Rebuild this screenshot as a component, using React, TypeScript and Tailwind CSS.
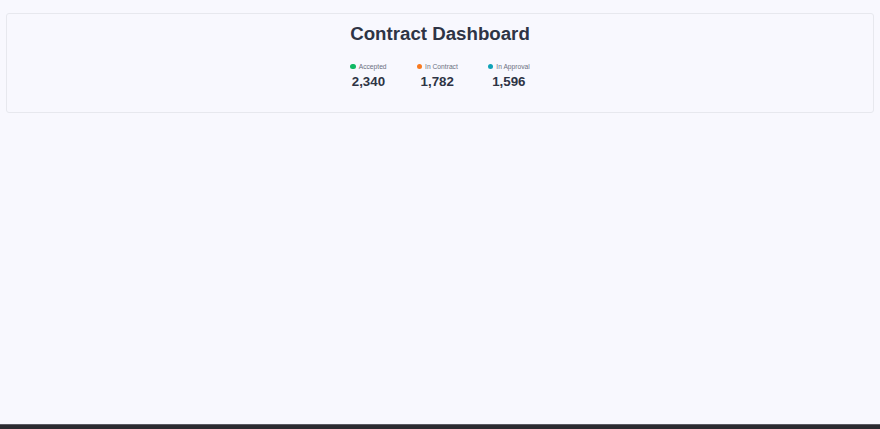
import React from "react";

const stats = [
  { label: "Accepted", value: "2,340", dot: "bg-[#10b964]" },
  { label: "In Contract", value: "1,782", dot: "bg-[#f97a1f]" },
  { label: "In Approval", value: "1,596", dot: "bg-[#0fa3b8]" },
];

export default function App() {
  return (
    <div className="h-[429px] flex flex-col bg-[#f8f8fe] font-['Liberation_Sans',Arial,sans-serif]">
      <div className="flex-1 px-[6px] pt-[13px]">
        <div className="rounded-[3px] border border-[#e7e8ee] h-[100px] flex flex-col items-center pt-[8px]">
          <h1 className="text-[18.7px] font-bold text-[#2e3445] leading-[24px]">Contract Dashboard</h1>

          {/* Stats row */}
          <div className="flex gap-[30px] mt-[16px]">
            {stats.map((s) => (
              <div key={s.label} className="flex flex-col items-center">
                <div className="flex items-center gap-[3px]">
                  <span className={`w-[5.5px] h-[5.5px] rounded-full ${s.dot}`} />
                  <span className="text-[6.7px] text-[#6b7080] leading-[9px]">{s.label}</span>
                </div>
                <div className="text-[13.3px] font-bold text-[#2e3445] leading-[16px] mt-[3px]">{s.value}</div>
              </div>
            ))}
          </div>
        </div>
      </div>
      <div className="h-[5px] bg-[#2b2b30] border-t border-[#5a5a62]" />
    </div>
  );
}
